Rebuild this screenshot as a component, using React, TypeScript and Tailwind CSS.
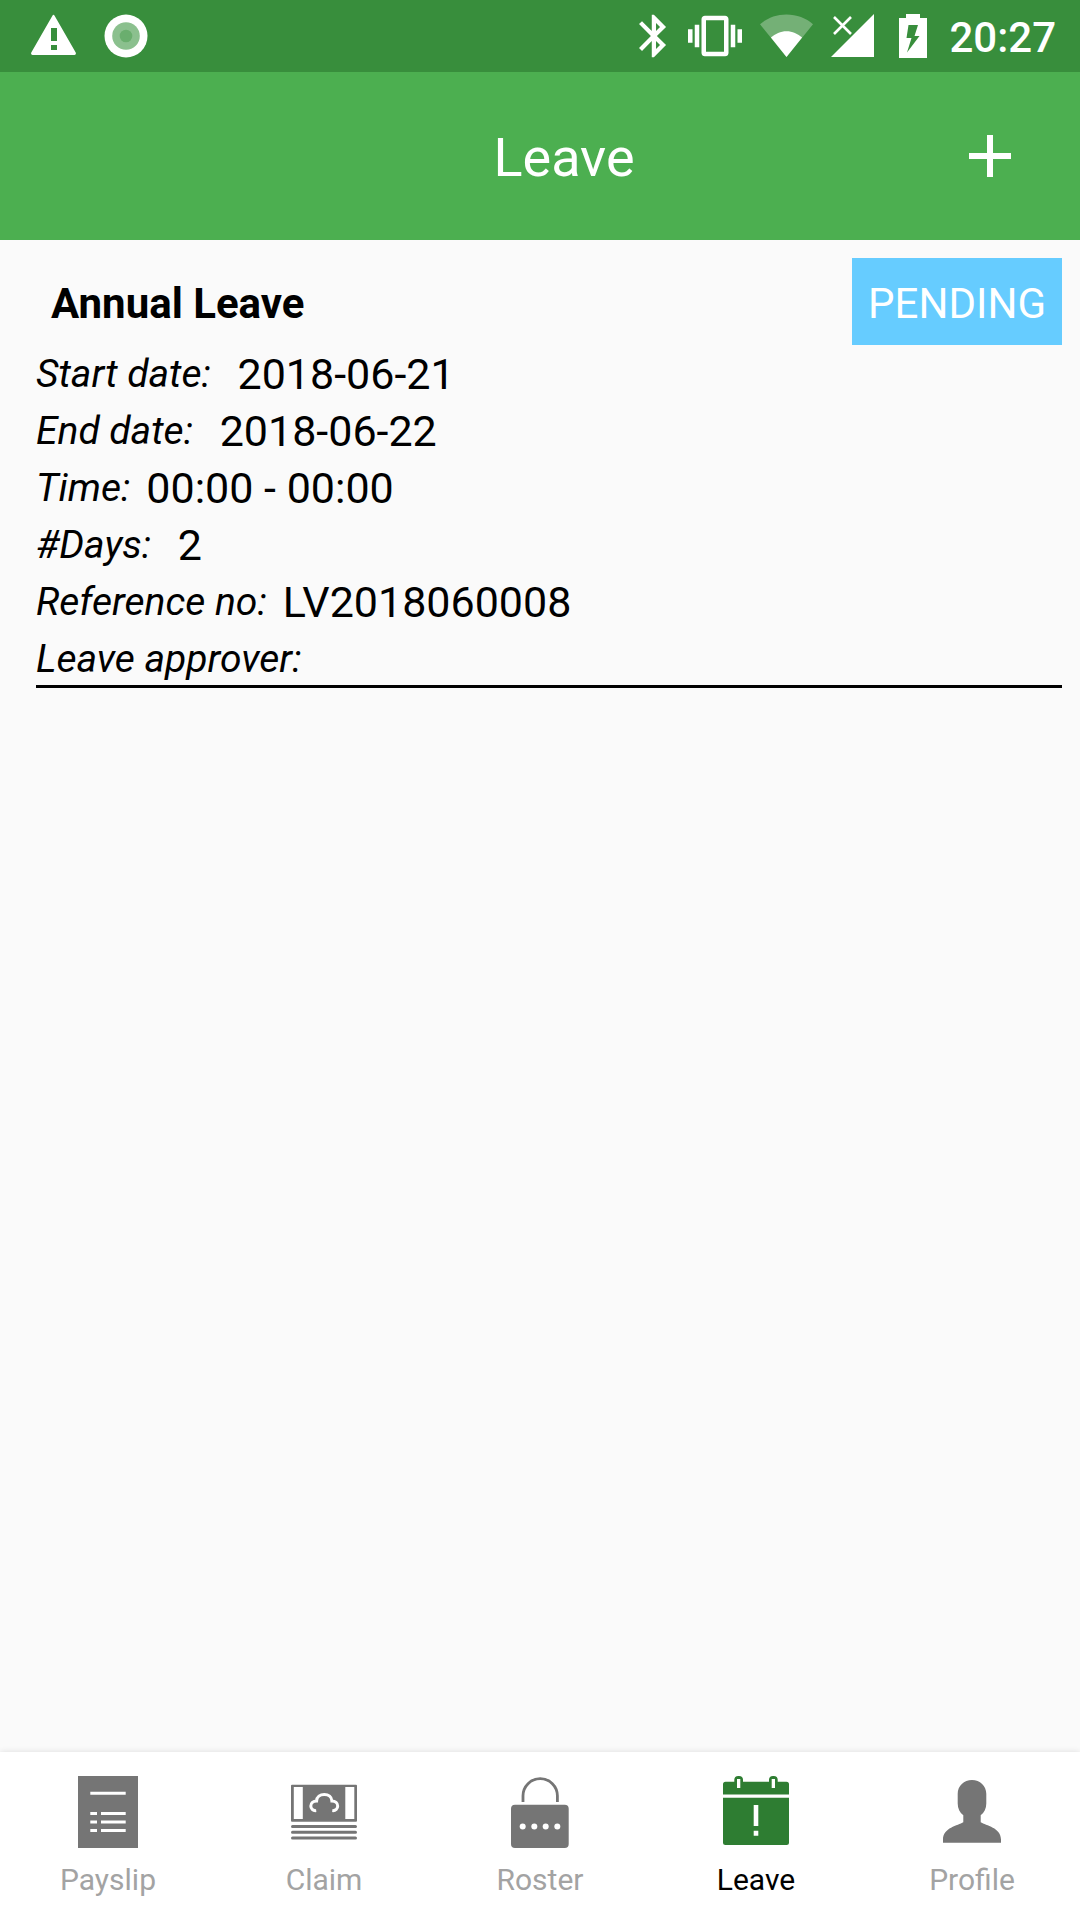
import React from 'react';

interface LeaveField {
  label: string;
  value: string;
}

interface LeaveRequest {
  type: string;
  status: string;
  fields: LeaveField[];
}

interface Tab {
  name: string;
  icon: React.ReactNode;
}

const leaveRequests: LeaveRequest[] = [
  {
    type: 'Annual Leave',
    status: 'PENDING',
    fields: [
      { label: 'Start date:', value: ' 2018-06-21' },
      { label: 'End date:', value: ' 2018-06-22' },
      { label: 'Time:', value: '00:00 - 00:00' },
      { label: '#Days:', value: ' 2' },
      { label: 'Reference no:', value: 'LV2018060008' },
      { label: 'Leave approver:', value: '' },
    ],
  },
];

const PayslipIcon = () => (
  <svg className="size-[72px]" viewBox="0 0 72 72" aria-hidden="true">
    <path fill="currentColor" d="M6 0h60v72H6z" />
    <path fill="#fff" d="M18.3 15.7h35.4v3H18.3zM18.3 36H25v3h-6.7zM29 36h24.7v3H29zM18.3 44.5H25v3h-6.7zM29 44.5h24.7v3H29zM18.3 53H25v3h-6.7zM29 53h24.7v3H29z" />
  </svg>
);

const ClaimIcon = () => (
  <svg className="size-[72px]" viewBox="0 0 72 72" aria-hidden="true">
    <rect x="3" y="8.7" width="66" height="37" rx="1" fill="currentColor" />
    <path fill="#fff" d="M5.8 11h9v32h-9zM57.3 11h9v32h-9z" />
    <path
      fill="none"
      stroke="#fff"
      strokeWidth="3"
      d="M28.2 34.6C24.8 35 22.8 32.6 22.8 30c0-3 2.4-5.1 5.8-5.1C28.8 21 32 18.6 36.3 18.6s7.4 2.4 7.6 6.3c3.4 0 5.8 2.1 5.8 5.1 0 2.6-2 5-5.4 4.6"
    />
    <path stroke="currentColor" strokeWidth="3" strokeLinecap="round" d="M4.5 50.4h63M4.5 56.2h63M4.5 62h63" />
  </svg>
);

const RosterIcon = () => (
  <svg className="size-[72px]" viewBox="0 0 72 72" aria-hidden="true">
    <path fill="none" stroke="currentColor" strokeWidth="2.8" d="M19 26v-6.200a17.200 17.200 0 0 1 34.400 0V26" />
    <rect x="7" y="28.700" width="57.700" height="43.300" rx="4" fill="currentColor" />
    <g fill="#fff">
      <circle cx="18.700" cy="50.400" r="3" />
      <circle cx="30.300" cy="50.400" r="3" />
      <circle cx="41.700" cy="50.400" r="3" />
      <circle cx="53.300" cy="50.400" r="3" />
    </g>
  </svg>
);

const LeaveIcon = () => (
  <svg className="size-[72px]" viewBox="0 0 72 72" aria-hidden="true">
    <path
      fill="currentColor"
      d="M3 18.400V8.200Q3 5.700 5.500 5.700h8.800V4a4 4 0 0 1 4-4H19a4 4 0 0 1 4 4v1.700h26V4a4 4 0 0 1 4-4h.7a4 4 0 0 1 4 4v1.700h8.800Q69 5.700 69 8.200v10.200zM3 21.700h66v44.800q0 2.500-2.500 2.500h-61Q3 69 3 66.500z"
    />
    <path fill="#fff" d="M17 3h3.300v9H17zM51.700 3H55v9h-3.300zM33.700 29h4.600v21h-4.600zM33.700 54.700h4.600v5h-4.600z" />
  </svg>
);

const ProfileIcon = () => (
  <svg className="size-[72px]" viewBox="0 0 72 72" aria-hidden="true">
    <path
      fill="currentColor"
      d="M36 4c8 0 14.300 6 14.300 13.700v9.800c0 5-2 9-5.600 11.700v7C50 49.500 65 51.500 65 63.500v3.200H7v-3.200C7 51.500 22 49.500 27.300 46.200v-7c-3.600-2.700-5.600-6.700-5.600-11.700v-9.800C21.700 10 28 4 36 4z"
    />
  </svg>
);

const tabs: Tab[] = [
  { name: 'Payslip', icon: <PayslipIcon /> },
  { name: 'Claim', icon: <ClaimIcon /> },
  { name: 'Roster', icon: <RosterIcon /> },
  { name: 'Leave', icon: <LeaveIcon /> },
  { name: 'Profile', icon: <ProfileIcon /> },
];

const StatusBar: React.FC = () => (
  <div className="flex h-[72px] items-center justify-between bg-[#388e3c] pl-[31px] pr-6 text-white">
    <div className="flex items-center gap-7">
      <svg className="h-11 w-[45px]" viewBox="0 0 45 44" aria-hidden="true">
        <path fill="currentColor" fillRule="evenodd" d="M21.400 1.700q1.100-1.700 2.200 0L44.700 38.500q.8 2.200-1.200 2.500h-42Q-.5 40.700.3 38.500zM20 14v13h6V14zM20 31v5h6v-5z" />
      </svg>
      <svg className="size-11" viewBox="0 0 44 44" aria-hidden="true">
        <circle cx="22" cy="22" r="21.500" fill="#fff" />
        <circle cx="22" cy="22" r="13.800" fill="#8bc08e" />
        <circle cx="22" cy="22" r="6.300" fill="#6aae6e" />
      </svg>
    </div>
    <div className="flex items-center gap-[18px]">
      <svg className="h-11 w-[31px]" viewBox="0 0 31 44" aria-hidden="true">
        <path
          fill="currentColor"
          transform="translate(-10.600 -3.500) scale(2.125)"
          d="M17.710 7.710 12 2h-1v7.590L6.410 5 5 6.410 10.590 12 5 17.590 6.410 19 11 14.410V22h1l5.710-5.710-4.300-4.290zM13 5.830l1.880 1.880L13 9.590zm1.880 10.460L13 18.170v-3.760z"
        />
      </svg>
      <svg className="size-[54px]" viewBox="0 0 24 24" aria-hidden="true">
        <path
          fill="currentColor"
          d="M0 15h2V9H0zm3 2h2V7H3zm19-8v6h2V9zm-3 8h2V7h-2zM16.500 3h-9C6.670 3 6 3.670 6 4.500v15c0 .830.670 1.500 1.500 1.500h9c.830 0 1.500-.670 1.500-1.500v-15c0-.830-.670-1.500-1.500-1.500zM16 19H8V5h8z"
        />
      </svg>
      <svg className="h-11 w-[53px]" viewBox="0 0 53 44" aria-hidden="true">
        <path fill="currentColor" fillOpacity=".3" d="M26.500 43 0 10.300C7 4.200 16.300.6 26.500.6S46 4.200 53 10.300z" />
        <path fill="currentColor" d="M26.500 43 10.900 23.500c4.300-3.600 9.700-6.300 15.600-6.300s11.300 2.700 15.600 6.300z" />
      </svg>
      <svg className="h-11 w-[50px]" viewBox="0 0 50 44" aria-hidden="true">
        <path fill="currentColor" d="M0 43 43 0v43z" />
        <path stroke="#388e3c" strokeWidth="6" d="m3 3 18 18" />
        <path stroke="currentColor" strokeWidth="2.600" d="m3 3 17 17M20 3 3 20" />
      </svg>
      <svg className="h-11 w-8" viewBox="0 0 32 44" aria-hidden="true">
        <path fill="currentColor" fillRule="evenodd" d="M7 4V0h14v4h7v40H0V4zM9.500 11 7.500 24h5L8 38.500 20.500 22h-5l3.500-11z" />
      </svg>
      <span className="pt-1 text-[42px] leading-[50px] font-medium">20:27</span>
    </div>
  </div>
);

const LeaveCard: React.FC<{ request: LeaveRequest }> = ({ request }) => (
  <article className="border-b-[3px] border-black">
    <div className="flex items-start justify-between">
      <h2 className="pt-[21px] pl-[15px] text-[42px] leading-[50px] font-bold">{request.type}</h2>
      <span className="bg-[#66ccff] px-4 pt-[21px] pb-[17px] text-[42px] leading-[49px] text-white">{request.status}</span>
    </div>
    <dl className="pt-[7px]">
      {request.fields.map((field) => (
        <div key={field.label} className="flex h-[57px] items-start gap-4 last:h-12">
          <dt className="text-[39px] leading-[45px] italic">{field.label}</dt>
          <dd className="text-[43px] leading-[45px] whitespace-pre">{field.value}</dd>
        </div>
      ))}
    </dl>
  </article>
);

const App: React.FC = () => {
  const [activeTab, setActiveTab] = React.useState('Leave');

  return (
    <div className="flex min-h-screen flex-col bg-[#fafafa] font-[Roboto,sans-serif] text-black">
      <StatusBar />
      <header className="grid h-[168px] grid-cols-[1fr_auto_1fr] items-center bg-[#4caf50] pr-[54px] pl-[102px] text-white">
        <h1 className="col-start-2 pt-1 text-[54px] leading-[64px]">Leave</h1>
        <button type="button" aria-label="Add leave" className="justify-self-end">
          <svg className="size-[72px]" viewBox="0 0 24 24" aria-hidden="true">
            <path fill="currentColor" d="M19 13h-6v6h-2v-6H5v-2h6V5h2v6h6z" />
          </svg>
        </button>
      </header>

      <main className="flex-1 pt-[18px] pr-[18px] pl-9">
        {leaveRequests.map((request) => (
          <LeaveCard key={request.type} request={request} />
        ))}
      </main>

      <nav className="grid h-[168px] grid-cols-5 bg-white shadow-[0_0_6px_rgba(0,0,0,0.12)]">
        {tabs.map((tab) => (
          <button
            key={tab.name}
            type="button"
            onClick={() => setActiveTab(tab.name)}
            className="flex flex-col items-center gap-[14px] pt-6"
          >
            <span className={tab.name === activeTab ? 'text-[#2e7d32]' : 'text-[#757575]'}>{tab.icon}</span>
            <span className={tab.name === activeTab ? 'text-[30px] leading-9 text-black' : 'text-[30px] leading-9 text-[#a3a3a3]'}>
              {tab.name}
            </span>
          </button>
        ))}
      </nav>
    </div>
  );
};

export default App;
